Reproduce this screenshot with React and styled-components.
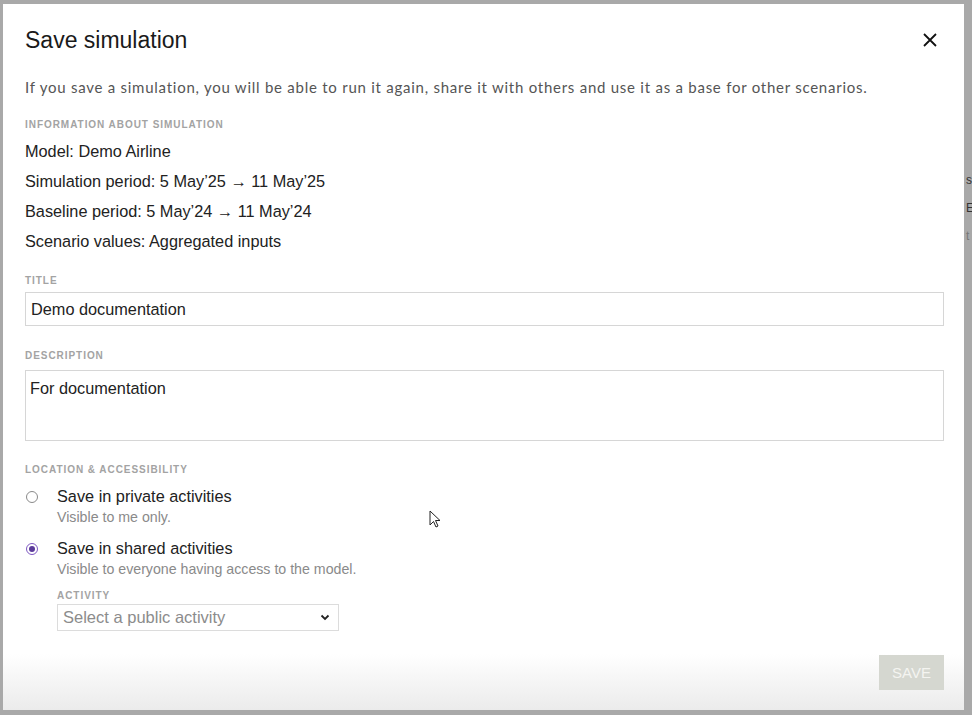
import styled, { createGlobalStyle } from 'styled-components'

const GlobalStyle = createGlobalStyle`
  html, body {
    margin: 0;
    padding: 0;
    background: #a9a9a9;
    font-family: "Liberation Sans", Arial, sans-serif;
  }
`

const Screen = styled.div`
  width: 972px;
  height: 715px;
  display: flex;
  padding: 4px 0 5px 3px;
  box-sizing: border-box;
  overflow: hidden;
`

const Modal = styled.div`
  position: relative;
  width: 961px;
  height: 706px;
  flex-shrink: 0;
  background: linear-gradient(to bottom, #ffffff 0, #ffffff 650px, #ebebeb 706px);
  box-sizing: border-box;
  padding: 0 20px 0 22px;
  display: flex;
  flex-direction: column;
`

const Peek = styled.div`
  flex: 1;
  display: flex;
  flex-direction: column;
  gap: 13px;
  padding: 169px 0 0 2px;
  font-size: 12px;
  line-height: 15px;
  color: #333;
  overflow: hidden;
`

const Header = styled.div`
  display: flex;
  align-items: center;
  justify-content: space-between;
  height: 72px;
`

const Heading = styled.h1`
  margin: 0;
  font-size: 23px;
  font-weight: 400;
  color: #1a1a1a;
`

const CloseButton = styled.button`
  border: 0;
  background: none;
  padding: 0;
  width: 16px;
  height: 16px;
  margin-right: 6px;
  display: flex;
  cursor: pointer;
`

const Intro = styled.p`
  margin: 2px 0 0;
  font-family: Lato, "Liberation Sans", sans-serif;
  font-size: 15px;
  color: #555;
  letter-spacing: 0.75px;
`

const Label = styled.div`
  font-size: 10px;
  line-height: 12px;
  font-weight: 700;
  letter-spacing: 0.95px;
  color: #a3a3a3;
  text-transform: uppercase;
  margin-top: ${p => p.top || 0}px;
  margin-bottom: ${p => p.bottom || 0}px;
`

const InfoList = styled.div`
  display: flex;
  flex-direction: column;
  gap: 11px;
  margin-top: 11px;
`

const InfoLine = styled.div`
  font-size: 16.3px;
  line-height: 19px;
  color: #222;
`

const TextInput = styled.input`
  box-sizing: border-box;
  width: 100%;
  height: 34px;
  border: 1px solid #d6d6d6;
  padding: 0 5px;
  font-family: "Liberation Sans", Arial, sans-serif;
  font-size: 16.3px;
  color: #222;
  outline: none;
`

const TextArea = styled.textarea`
  box-sizing: border-box;
  width: 100%;
  height: 71px;
  border: 1px solid #d6d6d6;
  padding: 8px 4px;
  font-family: "Liberation Sans", Arial, sans-serif;
  font-size: 16.3px;
  line-height: 19px;
  color: #222;
  resize: none;
  outline: none;
  display: block;
`

const Options = styled.div`
  display: flex;
  flex-direction: column;
  gap: 13px;
  margin-top: 11px;
`

const Option = styled.label`
  display: grid;
  grid-template-columns: 32px 1fr;
  cursor: pointer;
`

const Radio = styled.span`
  box-sizing: border-box;
  width: 12px;
  height: 12px;
  border-radius: 50%;
  margin: 4px 0 0 1px;
  border: 1px solid ${p => (p.checked ? '#7e57c2' : '#8a8a8a')};
  display: flex;
  align-items: center;
  justify-content: center;

  &::after {
    content: '';
    width: 6px;
    height: 6px;
    border-radius: 50%;
    background: ${p => (p.checked ? '#5b3a9a' : 'transparent')};
  }
`

const OptionTitle = styled.div`
  font-size: 16.3px;
  line-height: 19px;
  color: #222;
`

const OptionHint = styled.div`
  font-size: 14.2px;
  line-height: 17px;
  margin-top: 3px;
  color: #8a8a8a;
`

const SelectBox = styled.div`
  box-sizing: border-box;
  width: 282px;
  height: 27px;
  border: 1px solid #dcdcdc;
  display: flex;
  align-items: center;
  justify-content: space-between;
  padding: 0 8px 0 5px;
  font-size: 16.5px;
  color: #8c8c8c;
`

const Footer = styled.div`
  margin-top: auto;
  display: flex;
  justify-content: flex-end;
  padding-bottom: 20px;
`

const SaveButton = styled.button`
  width: 65px;
  height: 35px;
  border: 0;
  background: #d5d7d0;
  color: #f4f4f0;
  font-family: "Liberation Sans", Arial, sans-serif;
  font-size: 15px;
  text-transform: uppercase;
  cursor: default;
`

const Cursor = styled.svg`
  position: absolute;
  left: 426px;
  top: 506px;
`

const info = [
  'Model: Demo Airline',
  'Simulation period: 5 May\u201925 \u2192 11 May\u201925',
  'Baseline period: 5 May\u201924 \u2192 11 May\u201924',
  'Scenario values: Aggregated inputs',
]

export default function App() {
  return (
    <>
      <GlobalStyle />
      <Screen>
        <Modal>
          <Header>
            <Heading>Save simulation</Heading>
            <CloseButton aria-label="Close">
              <svg width="16" height="16" viewBox="0 0 16 16">
                <path d="M2 2 L14 14 M14 2 L2 14" stroke="#111" strokeWidth="1.8" />
              </svg>
            </CloseButton>
          </Header>
          <Intro>
            If you save a simulation, you will be able to run it again, share it with others and use it as a base for other scenarios.
          </Intro>
          <Label top={23}>Information about simulation</Label>
          <InfoList>
            {info.map(line => (
              <InfoLine key={line}>{line}</InfoLine>
            ))}
          </InfoList>
          <Label top={24} bottom={5}>Title</Label>
          <TextInput defaultValue="Demo documentation" />
          <Label top={24} bottom={8}>Description</Label>
          <TextArea defaultValue="For documentation" />
          <Label top={23}>Location &amp; accessibility</Label>
          <Options>
            <Option>
              <Radio />
              <div>
                <OptionTitle>Save in private activities</OptionTitle>
                <OptionHint>Visible to me only.</OptionHint>
              </div>
            </Option>
            <Option>
              <Radio checked />
              <div>
                <OptionTitle>Save in shared activities</OptionTitle>
                <OptionHint>Visible to everyone having access to the model.</OptionHint>
                <Label top={12} bottom={2}>Activity</Label>
                <SelectBox>
                  <span>Select a public activity</span>
                  <svg width="10" height="7" viewBox="0 0 10 7">
                    <path d="M1.5 1.5 L5 5 L8.5 1.5" fill="none" stroke="#222" strokeWidth="1.8" />
                  </svg>
                </SelectBox>
              </div>
            </Option>
          </Options>
          <Footer>
            <SaveButton>Save</SaveButton>
          </Footer>
          <Cursor width="12" height="19" viewBox="0 0 12 19">
            <path d="M1 1 L1 15 L4.5 11.5 L7 17 L9 16 L6.5 10.5 L11 10.5 Z" fill="#fff" stroke="#222" strokeWidth="1" />
          </Cursor>
        </Modal>
        <Peek>
          <span>s</span>
          <span>E</span>
          <span style={{ color: '#777' }}>t</span>
        </Peek>
      </Screen>
    </>
  )
}
